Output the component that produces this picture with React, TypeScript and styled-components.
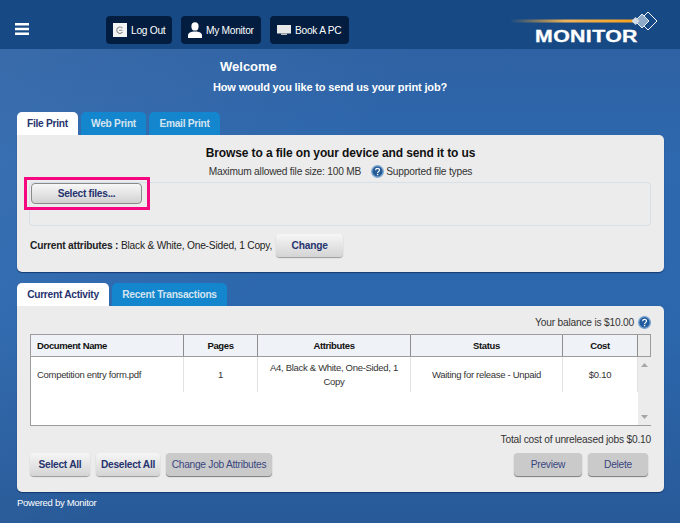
import * as React from 'react';
import styled, { createGlobalStyle } from 'styled-components';

const GlobalStyle = createGlobalStyle`
  html, body {
    margin: 0;
    padding: 0;
    background: #2a62a6;
  }
  * {
    box-sizing: border-box;
  }
`;

const jobColumns = [
  { title: 'Document Name', width: 153, left: true },
  { title: 'Pages', width: 74 },
  { title: 'Attributes', width: 153 },
  { title: 'Status', width: 152 },
  { title: 'Cost', width: 75 },
];

const HelpIcon: React.FC<{ small?: boolean }> = ({ small }) => (
  <HelpSvg $small={small} viewBox='0 0 13 13'>
    <circle cx='6.5' cy='6.5' r='6.5' fill={small ? '#7fa6cf' : '#6f9ccb'} />
    <circle cx='6.5' cy='6.5' r='5' fill={small ? '#245a96' : '#1f5a9e'} />
    <path d='M4.600 5.200c0-2.400 3.900-2.400 3.900-.1 0 1.500-1.900 1.500-1.900 2.900' fill='none' stroke='#fff' strokeWidth='1.200' />
    <rect x='5.900' y='8.800' width='1.400' height='1.400' fill='#fff' />
  </HelpSvg>
);

const App: React.FC = () => (
  <Page>
    <GlobalStyle />
    <Header>
      <MenuIcon viewBox='0 0 14 12'>
        <path d='M0 0h14v2.4H0zM0 4.8h14v2.4H0zM0 9.6h14V12H0z' fill='#fff' />
      </MenuIcon>
      <HeaderButtons>
        <HeaderButton $width={66}>
          <svg width='14' height='14' viewBox='0 0 14 14'>
            <rect width='14' height='14' fill='#f4f4f4' />
            <path d='M9.5 5.2A3.2 3.2 0 1 0 9.6 9M6 7.2h3.4' fill='none' stroke='#8a8a8a' strokeWidth='1.1' />
          </svg>
          Log Out
        </HeaderButton>
        <HeaderButton $width={80}>
          <svg width='14' height='16' viewBox='0 0 14 16'>
            <ellipse cx='7' cy='4.4' rx='3.6' ry='4.2' fill='#fff' />
            <path d='M0 16v-2.6C0 10.800 3 9.400 7 9.400s7 1.400 7 4V16z' fill='#fff' />
          </svg>
          My Monitor
        </HeaderButton>
        <HeaderButton $width={79}>
          <svg width='14' height='12' viewBox='0 0 14 12'>
            <rect y='1' width='14' height='8.500' fill='#e8e8e8' />
            <path d='M4 9.500h6v1.500H4z' fill='#bdbdbd' />
          </svg>
          Book A PC
        </HeaderButton>
      </HeaderButtons>
      <Logo>
        <LogoMark width='150' height='24' viewBox='0 0 150 24'>
          <defs>
            <linearGradient id='streak' x1='0' x2='1' y1='0' y2='0'>
              <stop offset='0' stopColor='#f5a623' stopOpacity='0' />
              <stop offset='0.45' stopColor='#eeb35c' />
              <stop offset='1' stopColor='#f7a11a' />
            </linearGradient>
          </defs>
          <rect x='2' y='11.500' width='124' height='3' fill='url(#streak)' />
          <path d='M140 4l9 9-9 9-9-9z' fill='#174a85' stroke='#fff' strokeWidth='1' />
          <path d='M134 6l7 7-7 7-7-7z' fill='#8fa9c8' stroke='#e6edf4' strokeWidth='1' />
          <path d='M127.500 9l4 4-4 4-4-4z' fill='#d3dde8' />
        </LogoMark>
        <LogoText>MONITOR</LogoText>
      </Logo>
    </Header>

    <Main>
      <WelcomeTitle>Welcome</WelcomeTitle>
      <WelcomeText>How would you like to send us your print job?</WelcomeText>

      <Tabs>
        <Tab $active $width={61}>File Print</Tab>
        <Tab $width={65}>Web Print</Tab>
        <Tab $width={71}>Email Print</Tab>
      </Tabs>
      <PrintPanel>
        <PanelTitle>Browse to a file on your device and send it to us</PanelTitle>
        <FileInfo>
          Maximum allowed file size: 100 MB
          <HelpIcon small />
          Supported file types
        </FileInfo>
        <DropZone>
          <SelectHighlight>
            <SelectButton>Select files...</SelectButton>
          </SelectHighlight>
        </DropZone>
        <AttributesRow>
          <b>Current attributes :</b>&nbsp;Black &amp; White, One-Sided, 1 Copy,
          <ChangeButton>Change</ChangeButton>
        </AttributesRow>
      </PrintPanel>

      <ActivityTabs>
        <Tab $active $width={92}>Current Activity</Tab>
        <Tab $width={115}>Recent Transactions</Tab>
      </ActivityTabs>
      <ActivityPanel>
        <Balance>
          Your balance is $10.00
          <HelpIcon />
        </Balance>
        <JobTable>
          <HeadRow>
            {jobColumns.map(col => (
              <HeadCell key={col.title} $width={col.width} $left={col.left}>{col.title}</HeadCell>
            ))}
            <HeadSpacer />
          </HeadRow>
          <TableBody>
            <BodyRows>
              <JobRow>
                <JobCell $width={153} $left>Competition entry form.pdf</JobCell>
                <JobCell $width={74}>1</JobCell>
                <JobCell $width={153}>A4, Black &amp; White, One-Sided, 1 Copy</JobCell>
                <JobCell $width={152}>Waiting for release - Unpaid</JobCell>
                <JobCell $width={75}>$0.10</JobCell>
              </JobRow>
            </BodyRows>
            <ScrollTrack>
              <ScrollArrow viewBox='0 0 7 4'><path d='M3.500 0L7 4H0z' fill='#a6a6a6' /></ScrollArrow>
              <ScrollArrow viewBox='0 0 7 4'><path d='M0 0h7L3.500 4z' fill='#a6a6a6' /></ScrollArrow>
            </ScrollTrack>
          </TableBody>
        </JobTable>
        <TotalCost>Total cost of unreleased jobs $0.10</TotalCost>
        <ActionRow>
          <ActionButton $width={60}>Select All</ActionButton>
          <ActionButton $width={64}>Deselect All</ActionButton>
          <ActionButton $width={106} $disabled>Change Job Attributes</ActionButton>
          <ActionSpacer />
          <ActionButton $width={68} $disabled>Preview</ActionButton>
          <ActionButton $width={60} $disabled>Delete</ActionButton>
        </ActionRow>
      </ActivityPanel>
      <Footer>Powered by Monitor</Footer>
    </Main>
  </Page>
);

export default App;

const Page = styled.div`
  width: 680px;
  height: 523px;
  overflow: hidden;
  display: flex;
  flex-direction: column;
  font-family: "Liberation Sans", Arial, sans-serif;
  font-size: 10.2px;
  letter-spacing: -.27px;
  color: #222;
  background:
    linear-gradient(125deg, rgba(255,255,255,.06) 0%, rgba(255,255,255,0) 45%),
    linear-gradient(180deg, #2e5f9f 0%, #2e68ae 30%, #2c67ad 62%, #285a98 100%);
`;

const Header = styled.header`
  height: 49px;
  flex: none;
  display: flex;
  align-items: flex-start;
  padding: 16px 22px 0 15px;
  background: #174a85;
`;

const MenuIcon = styled.svg`
  width: 14px;
  height: 12px;
  margin-top: 7px;
  flex: none;
`;

const HeaderButtons = styled.div`
  display: flex;
  gap: 9px;
  margin-left: 77px;
`;

const HeaderButton = styled.div<{ $width: number }>`
  width: ${p => p.$width}px;
  height: 28px;
  padding-left: 7px;
  display: flex;
  align-items: center;
  gap: 4px;
  background: #021d40;
  border-radius: 4px;
  color: #fff;
  white-space: nowrap;
`;

const Logo = styled.div`
  margin-left: auto;
  margin-top: -8px;
  width: 150px;
  height: 42px;
  display: flex;
  flex-direction: column;
`;

const LogoMark = styled.svg`
  display: block;
  flex: none;
`;

const LogoText = styled.div`
  margin-top: -4px;
  margin-left: 27px;
  color: #fff;
  font-weight: 700;
  font-size: 16px;
  line-height: 18px;
  letter-spacing: .3px;
  transform: scaleX(1.33);
  transform-origin: left center;
  -webkit-text-stroke: .3px #fff;
  white-space: nowrap;
`;

const Main = styled.main`
  flex: 1;
  padding: 0 16px 0 17px;
  display: flex;
  flex-direction: column;
`;

const WelcomeTitle = styled.h1`
  margin: 10px 0 0 203px;
  color: #fff;
  font-size: 13px;
  line-height: 16px;
  font-weight: 700;
  letter-spacing: 0;
`;

const WelcomeText = styled.div`
  margin: 6px 0 0 196px;
  color: #fff;
  font-size: 11px;
  line-height: 13px;
  font-weight: 700;
  letter-spacing: -.15px;
`;

const Tabs = styled.div`
  display: flex;
  gap: 3px;
  margin-top: 18px;
  height: 23px;
`;

const ActivityTabs = styled(Tabs)`
  margin-top: 11px;
`;

const Tab = styled.div<{ $active?: boolean; $width: number }>`
  width: ${p => p.$width}px;
  display: flex;
  align-items: center;
  justify-content: center;
  border-radius: 5px 5px 0 0;
  font-weight: 700;
  background: ${p => (p.$active ? '#fff' : '#1486cd')};
  color: ${p => (p.$active ? '#26336e' : '#d3e4f1')};
`;

const Panel = styled.section`
  background: #ececec;
  border-radius: 0 5px 5px 5px;
  box-shadow: 0 1px 1px rgba(10, 40, 90, .7);
  padding: 0 13px;
  display: flex;
  flex-direction: column;
`;

const PrintPanel = styled(Panel)`
  height: 137px;
`;

const PanelTitle = styled.div`
  margin-top: 11px;
  text-align: center;
  color: #111;
  font-size: 12px;
  line-height: 14px;
  font-weight: 700;
  letter-spacing: -.12px;
`;

const FileInfo = styled.div`
  margin-top: 5px;
  display: flex;
  justify-content: center;
  align-items: center;
  height: 13px;
  color: #333;
  letter-spacing: -.2px;
`;

const HelpSvg = styled.svg<{ $small?: boolean }>`
  width: 13px;
  height: 13px;
  flex: none;
  margin-left: ${p => (p.$small ? '10px' : '4px')};
  margin-right: ${p => (p.$small ? '2px' : '0')};
`;

const DropZone = styled.div`
  margin-top: 4px;
  height: 44px;
  margin-left: -1px;
  border: 1px solid #d5e0e8;
  border-radius: 4px;
  position: relative;
`;

const SelectHighlight = styled.div`
  position: absolute;
  left: -6px;
  top: -6px;
  width: 126px;
  height: 33px;
  border: 3px solid #f5087f;
  padding: 3px 4px;
`;

const SelectButton = styled.div`
  width: 111px;
  height: 21px;
  display: flex;
  align-items: center;
  justify-content: center;
  border: 1px solid #8a8a8a;
  border-radius: 4px;
  background: linear-gradient(180deg, #f7f7f7, #d2d2d2);
  color: #26336e;
  font-weight: 700;
`;

const AttributesRow = styled.div`
  margin-top: 7px;
  display: flex;
  align-items: center;
  height: 24px;
  color: #222;
  letter-spacing: -.2px;
`;

const RaisedButton = styled.div`
  display: flex;
  align-items: center;
  justify-content: center;
  border-radius: 4px;
  background: linear-gradient(180deg, #f6f6f6, #d4d4d4);
  box-shadow: 0 1px 1px #9a9a9a;
  color: #26336e;
  font-weight: 700;
`;

const ChangeButton = styled(RaisedButton)`
  width: 67px;
  height: 23px;
  margin-left: 4px;
`;

const ActivityPanel = styled(Panel)`
  height: 186px;
`;

const Balance = styled.div`
  height: 13px;
  margin-top: 10px;
  display: flex;
  justify-content: flex-end;
  align-items: center;
  color: #333;
  letter-spacing: -.2px;
`;

const JobTable = styled.div`
  width: 621px;
  margin-top: 5px;
  height: 92px;
  background: #fff;
  border: 1px solid #9c9c9c;
  display: flex;
  flex-direction: column;
`;

const HeadRow = styled.div`
  display: flex;
  height: 22px;
  flex: none;
  background: #eff3f8;
  border-bottom: 1px solid #9c9c9c;
`;

const HeadCell = styled.div<{ $width: number; $left?: boolean }>`
  width: ${p => p.$width - 1}px;
  margin-right: 1px;
  display: flex;
  align-items: center;
  justify-content: ${p => (p.$left ? 'flex-start' : 'center')};
  padding-left: ${p => (p.$left ? '6px' : '0')};
  box-shadow: 1px 0 0 #8e8e8e;
  color: #111;
  font-weight: 700;
  font-size: 9.5px;
  letter-spacing: -.38px;
`;

const HeadSpacer = styled.div`
  flex: 1;
  background: #ececec;
`;

const TableBody = styled.div`
  flex: 1;
  display: flex;
  min-height: 0;
`;

const BodyRows = styled.div`
  flex: 1;
`;

const JobRow = styled.div`
  display: flex;
  height: 35px;
`;

const JobCell = styled.div<{ $width: number; $left?: boolean }>`
  width: ${p => p.$width}px;
  display: flex;
  align-items: center;
  justify-content: ${p => (p.$left ? 'flex-start' : 'center')};
  text-align: ${p => (p.$left ? 'left' : 'center')};
  padding: ${p => (p.$left ? '0 0 0 6px' : '0 8px')};
  border-right: 1px solid #e2e2e2;
  line-height: 14px;
  font-size: 9.5px;
  letter-spacing: -.3px;
  color: #333;
`;

const ScrollTrack = styled.div`
  width: 13px;
  flex: none;
  background: #ececec;
  display: flex;
  flex-direction: column;
  justify-content: space-between;
  align-items: center;
  padding: 6px 0;
`;

const ScrollArrow = styled.svg`
  width: 7px;
  height: 4px;
`;

const TotalCost = styled.div`
  margin-top: 7px;
  text-align: right;
  line-height: 13px;
  color: #333;
  letter-spacing: -.2px;
`;

const ActionRow = styled.div`
  margin-top: 7px;
  margin-right: 3px;
  display: flex;
  gap: 6px;
  height: 23px;
`;

const ActionButton = styled(RaisedButton)<{ $width: number; $disabled?: boolean }>`
  width: ${p => p.$width}px;
  ${p => p.$disabled && `
    background: #cacaca;
    color: #3a4680;
    font-weight: 400;
    box-shadow: 0 1px 1px #7a7a7a;
  `}
`;

const ActionSpacer = styled.div`
  flex: 1;
`;

const Footer = styled.footer`
  margin-top: 5px;
  color: #fff;
  font-size: 9.5px;
  letter-spacing: -.28px;
  line-height: 12px;
`;
